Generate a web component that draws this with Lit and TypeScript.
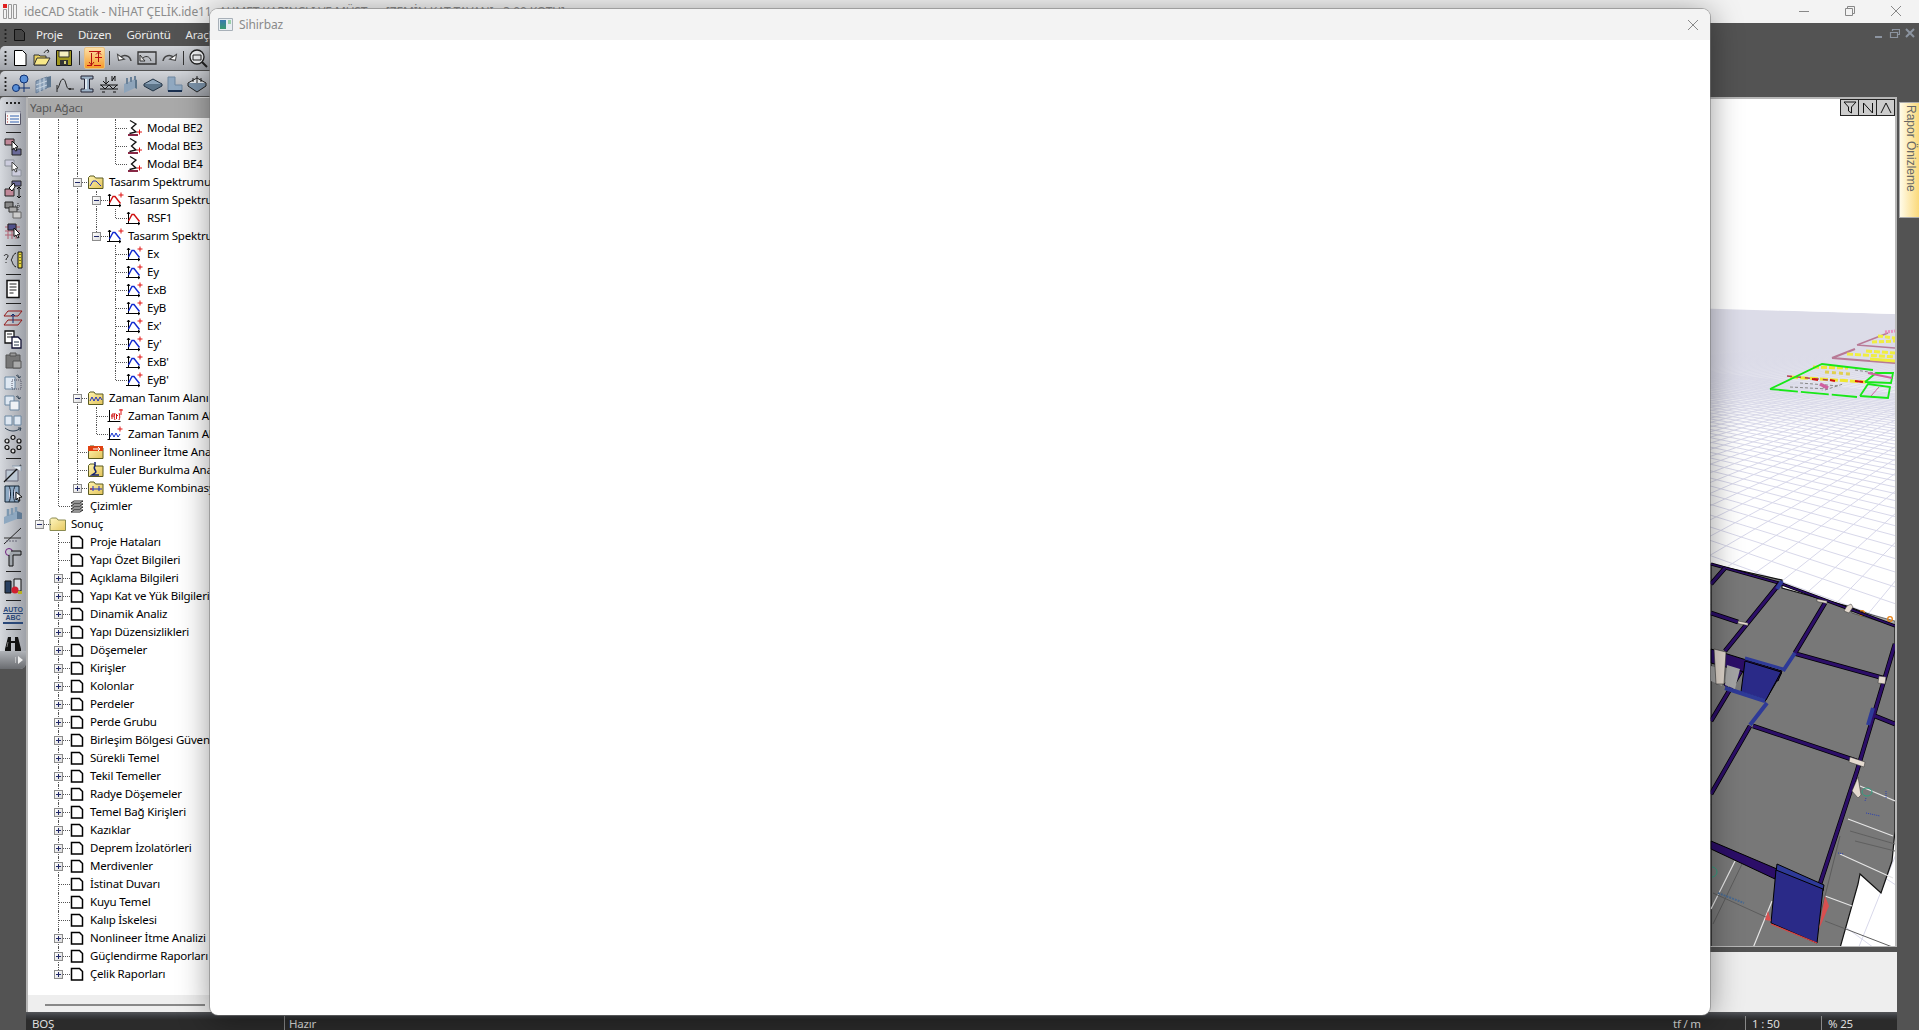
import { LitElement, html, css, svg } from "lit";
import { customElement } from "lit/decorators.js";

const icon = (w: number, h: number, body: unknown) =>
  html`<svg width=${w} height=${h} viewBox="0 0 ${w} ${h}">${body}</svg>`;

/* ---------- tree icons ---------- */
const plus = (x: number, y: number) => svg`<path d="M${x - 2.5} ${y}h5M${x} ${y - 2.5}v5" stroke="#e01010" fill="none"/>`;
const spectrum = (c: string) => icon(18, 16, svg`
  <path d="M3.500 2v12M1 13.500h14M2 4l1.500-2 1.500 2M13 12l2 1.500-2 1.500" stroke="#000" fill="none"/>
  <path d="M3.500 11L7 4.500h2l5.500 7" stroke=${c} stroke-width="1.400" fill="none"/>${plus(15, 3)}`);
const spectrumPlain = icon(18, 16, svg`
  <path d="M3.500 2v12M1 13.500h14M2 4l1.500-2 1.500 2M13 12l2 1.500-2 1.500" stroke="#000" fill="none"/>
  <path d="M3.500 11L7 4.500h2l5.500 7" stroke="#d01010" stroke-width="1.400" fill="none"/>`);
const sigma = icon(18, 18, svg`
  <path d="M5 1.500L11 5 6.500 9l4.500 4-6.500 1.500" stroke="#111" stroke-width="1.300" fill="none"/>
  <path d="M3 16h10" stroke="#7a1030" stroke-width="1.800"/>${plus(14.5, 13)}`);
const folderBase = (inner: unknown) => icon(18, 16, svg`
  <defs><linearGradient id="fg" x1="0" y1="0" x2="1" y2="1"><stop offset="0" stop-color="#fff4b0"/><stop offset="1" stop-color="#e3c35a"/></linearGradient></defs>
  <path d="M1.500 14.500V3.500L3 2h4l1.500 2h7.500v10.500z" fill="url(#fg)" stroke="#5a5a20"/>${inner}`);
const fSpec = folderBase(svg`<path d="M3 12l3-5h3l5 5" stroke="#2030c0" fill="none"/>`);
const fWave = folderBase(svg`<path d="M3 11l2-4 2 4 2-4 2 4 2-4 2 3" stroke="#2030c0" fill="none"/>`);
const fNon = folderBase(svg`<path d="M1 2h15v5H1z" fill="#e04010"/><path d="M6 5h7M11 3l2 2-2 2" stroke="#fff" fill="none"/>`);
const fEuler = folderBase(svg`<path d="M8 0v4c-3 3 3 5 0 7l-3 2h7" stroke="#102070" stroke-width="1.500" fill="none"/>`);
const fLoad = folderBase(svg`<path d="M3 9h12M6 6v5M12 6v5" stroke="#2030c0" fill="none"/><path d="M3 9h2" stroke="#d01010"/>`);
const folderPlain = icon(18, 16, svg`
  <defs><linearGradient id="fp" x1="0" y1="0" x2="1" y2="1"><stop offset="0" stop-color="#fff6c0"/><stop offset="1" stop-color="#e6c860"/></linearGradient></defs>
  <path d="M1 14.500V3.500L2.500 2h5l1.500 2h7.500v10.500z" fill="url(#fp)" stroke="#8a8a50"/>`);
const doc = icon(14, 14, svg`<path d="M1.500 1.500h8l3 3v8.500h-11z" fill="#fff" stroke="#000" stroke-width="1.500"/>`);
const drawings = icon(14, 14, svg`<path d="M1 4l3-2h9l-3 2zM1 7l3-2h9l-3 2zM1 10l3-2h9l-3 2zM1 13l3-2h9l-3 2z" fill="#fff" stroke="#111" stroke-width=".9"/>`);
const timeF = icon(18, 16, svg`
  <path d="M3.500 2v12M1.500 13.500h13" stroke="#000" fill="none"/>
  <path d="M6 11V6h2M5 8h3M9 5c-1 3-1 5 0 7M13 5c1 3 1 5 0 7M10.500 6v5M10 7.500h2" stroke="#d01010" fill="none"/>
  <path d="M15 1v6M13 2h4" stroke="#e01010" fill="none"/>`);
const timeW = icon(18, 16, svg`
  <path d="M3.500 2v12M1.500 13.500h13" stroke="#000" fill="none"/>
  <path d="M4 11l2-4 2 4 2-4 2 4 2-3" stroke="#1030d0" fill="none"/>${plus(14, 3)}`);

/* ---------- toolbar icons ---------- */
const T: Record<string, unknown> = {
  new: icon(20, 20, svg`<path d="M4.500 2.500h8l3.500 3.500v11.500H4.500z" fill="#fff" stroke="#000"/>`),
  open: icon(20, 20, svg`<path d="M2 17V7h5l1 1h6v9z" fill="#e8d060" stroke="#333"/><path d="M2 17l3-7h13l-4 7z" fill="#f8e888" stroke="#333"/><path d="M12 5c1-2.500 3-3 5-2M17 3l-2-1.500M17 3l-1.500 2" stroke="#333" fill="none"/>`),
  save: icon(20, 20, svg`<path d="M2.500 2.500h15v15h-15z" fill="#a09820" stroke="#111"/><path d="M5 3h10v6H5z" fill="#f4f0c0" stroke="#333"/><path d="M6 12h8v5.500H6z" fill="#333"/><path d="M10 13h2v3h-2z" fill="#d8d480"/>`),
  undo: icon(20, 20, svg`<path d="M5 10c3-4 10-3 11 3" stroke="#444" stroke-width="1.500" fill="none"/><path d="M3 6v6h6z" fill="#fff" stroke="#444" transform="rotate(-10 5 9)"/>`),
  box: icon(22, 20, svg`<path d="M2 4h18v12H2z" fill="none" stroke="#333" stroke-width="1.300"/><path d="M6 11c3-4 8-3 9 2" stroke="#333" fill="none"/><path d="M4 7v6h5z" fill="#ddd" stroke="#333"/>`),
  redo: icon(20, 20, svg`<path d="M15 10c-3-4-10-3-11 3" stroke="#444" stroke-width="1.500" fill="none"/><path d="M17 6v6h-6z" fill="#fff" stroke="#444" transform="rotate(10 15 9)"/>`),
  zoom: icon(20, 20, svg`<circle cx="9" cy="9" r="7" fill="#f4f6f8" stroke="#222" stroke-width="1.300"/><path d="M5 7h8v5H5z" fill="none" stroke="#222"/><path d="M14 14l5 5" stroke="#222" stroke-width="2"/>`),
  node: icon(20, 20, svg`<circle cx="13" cy="5" r="4" fill="#5a90d8" stroke="#103070"/><circle cx="5" cy="14" r="3.500" fill="#5a90d8" stroke="#103070"/><path d="M13 9v9M7 14h12" stroke="#103070"/>`),
  wall: icon(20, 20, svg`<path d="M3 7l11-4v11L3 19z" fill="#8aa0b8" stroke="#6a7f98"/><path d="M14 3l4-1v11l-4 1z" fill="#5d7690"/><path d="M3 11l11-4M3 15l11-4M7 5v13M11 4v12" stroke="#c8d4e0"/>`),
  curve: icon(20, 20, svg`<path d="M2 15c2 0 3-10 6-10s3 10 6 10" stroke="#222" fill="none"/><path d="M2 11v7M14 15h5" stroke="#222"/><circle cx="15" cy="15" r="1" fill="#222"/>`),
  ibeam: icon(20, 20, svg`<path d="M4 2h12v3h-3.500v10H16v3H4v-3h3.500V5H4z" fill="#9fb4c8" stroke="#223"/><path d="M8 5h2v10H8z" fill="#dfe8f0"/>`),
  load: icon(22, 20, svg`<path d="M2 11h18M2 15h18" stroke="#111"/><path d="M3 11l4 4 4-4 4 4 4-4" stroke="#111" fill="none"/><path d="M4 18h3M15 18h3M8 3v7M5 7l3 3 3-3" stroke="#111" fill="none"/><path d="M14 2v5l3-5v5" stroke="#111" fill="none"/>`),
  wall2: icon(20, 20, svg`<path d="M3 10l11-5v9L3 19z" fill="#8ea4ba"/><path d="M14 5l2 1v9l-2-1z" fill="#5c7489"/><path d="M6 4v6M10 3v5M14 2v4" stroke="#6a8198" stroke-width="2"/>`),
  slab: icon(20, 20, svg`<path d="M1 10l9-5 9 5-9 5z" fill="#8fa6bc" stroke="#234"/><path d="M1 10v2l9 5 9-5v-2" fill="#5c7489" stroke="#234"/>`),
  lshape: icon(20, 20, svg`<path d="M3 3h7v8h7v6H3z" fill="#90a8c0" stroke="#6f87a0"/><path d="M3 17h14" stroke="#1a3050" stroke-width="2"/>`),
  found: icon(20, 20, svg`<path d="M1 9l9-5 9 5-9 6z" fill="#f0f4f8" stroke="#222"/><path d="M1 9v3l9 6 9-6V9" fill="#7d94ab" stroke="#222"/><path d="M10 2v7M6 4v4M14 4v4" stroke="#222"/>`),
  list: icon(20, 20, svg`<path d="M2.500 3.500h15v13h-15z" fill="#f6f6f6" stroke="#556"/><path d="M2.500 3.500h15v2h-15z" fill="#d8dce4"/><path d="M7 8h9M7 11h9M7 14h9" stroke="#3060b0"/><path d="M4 8h1M4 11h1M4 14h1" stroke="#b02020"/>`),
  sel1: icon(20, 20, svg`<path d="M2 2h9v6H2z" fill="#c08898" stroke="#222"/><path d="M9 12h9v6H9z" fill="#6a6a98" stroke="#222"/><path d="M9 4l6 6-2.500.5 1.500 3-1.500.5-1.500-3-2 1.500z" fill="#fff" stroke="#111"/>`),
  sel2: icon(20, 20, svg`<path d="M2 2h9v6H2zM9 12h9v6H9z" fill="#ccd" stroke="#8a8f98"/><path d="M9 4l6 6-2.500.5 1.500 3-1.500.5-1.500-3-2 1.500z" fill="#fff" stroke="#444"/>`),
  sel3: icon(20, 20, svg`<path d="M9 2h9v5H9z" fill="#6a6a98" stroke="#222"/><path d="M2 10h9v7H2z" fill="#c08898" stroke="#222"/><path d="M6 9l5-5 1 4-3 4z" fill="#fff" stroke="#111"/><path d="M16 8v11M14 10l2-2 2 2M14 17l2 2 2-2" stroke="#111" fill="none"/>`),
  sel4: icon(20, 20, svg`<path d="M2 2h8v6H2z" fill="#888" stroke="#222"/><path d="M6 7h8v5H6z" fill="#aaa" stroke="#333"/><path d="M10 12h8v6h-8z" fill="#ccc" stroke="#666"/><path d="M15 3v7M12 6h6" stroke="#333" stroke-dasharray="1 1"/>`),
  sel5: icon(20, 20, svg`<path d="M2 6h15M2 10h15M2 14h15M5 3v15M9 3v15M13 3v15" stroke="#b06070"/><path d="M5 3h8v6H5z" fill="#50508a" stroke="#222"/><path d="M11 7l6 6-2.500.5 1.500 3-1.500.5-1.500-3-2 1.500z" fill="#fff" stroke="#111"/>`),
  ruler: icon(20, 20, svg`<path d="M15 2h4v16h-4z" fill="#e8d840" stroke="#111"/><path d="M17 4v12" stroke="#111" stroke-dasharray="1 2"/><path d="M13 3c-4 2-3 5-5 7 2 2 1 5 5 7" stroke="#111" fill="none"/><path d="M1 6c1-2 4-2 4 0s-2 2-2 4M3 12v1" stroke="#222" fill="none"/>`),
  report: icon(20, 20, svg`<path d="M4 1.500h12v17H4z" fill="#fff" stroke="#111" stroke-width="1.500"/><path d="M6.500 5h7M6.500 8h7M6.500 11h7M6.500 14h4" stroke="#222"/>`),
  floors: icon(20, 20, svg`<path d="M5 3h14l-4 5H1zM5 12h14l-4 5H1z" fill="none" stroke="#901818"/><path d="M10 6v9M8 8l2-2 2 2" stroke="#103070" fill="none"/>`),
  copy: icon(20, 20, svg`<path d="M2 2h9v12H2z" fill="#fff" stroke="#111" stroke-width="1.300"/><path d="M4 5h5M4 8h5" stroke="#222"/><path d="M9 8h6l3 3v8H9z" fill="#fff" stroke="#113" stroke-width="1.300"/><path d="M11 13h5M11 16h5" stroke="#234"/>`),
  paste: icon(20, 20, svg`<path d="M3 5h14v13H3z" fill="#777" stroke="#555"/><path d="M7 3h6v3H7z" fill="#999" stroke="#555"/><path d="M10 11h8v7h-8z" fill="#aaa" stroke="#555"/>`),
  rot1: icon(20, 20, svg`<path d="M2 6h10v12H2z" fill="#dfe8f2" stroke="#6a86a0"/><path d="M9 9h9v9H9z" fill="none" stroke="#556" stroke-dasharray="1 1"/><path d="M13 5c2-2 3 0 3 2M16 7l-1.500-2M16 7l2-1.500" stroke="#345" fill="none"/>`),
  rot2: icon(20, 20, svg`<path d="M2 4h9v9H2z" fill="#dfe8f2" stroke="#6a86a0"/><path d="M7 9h9v9H7z" fill="#eef2f6" stroke="#6a86a0"/><path d="M13 5c2-2 3 0 3 2M16 7l-1.500-2M16 7l2-1.500" stroke="#345" fill="none"/>`),
  mirror: icon(20, 20, svg`<path d="M2 3h7v9H2zM11 3h7v9h-7z" fill="#dfe8f2" stroke="#6a86a0"/><path d="M2 15c5 4 11 4 16 0M18 15h-3M18 15l-1 3" stroke="#345" fill="none"/>`),
  ring: icon(20, 20, svg`<g fill="#ddd" stroke="#111" stroke-width="1.200"><circle cx="10" cy="3.500" r="2"/><circle cx="16" cy="7" r="2"/><circle cx="16" cy="13.500" r="2"/><circle cx="10" cy="17" r="2"/><circle cx="4" cy="13.500" r="2"/><circle cx="4" cy="7" r="2"/></g>`),
  cut: icon(20, 20, svg`<path d="M3 7h12v11H3z" fill="#bcc8d4" stroke="#667"/><path d="M1 19L18 2" stroke="#111" stroke-width="1.300"/><path d="M9 3h9v5" fill="#e8eef4" stroke="#89a"/>`),
  col: icon(20, 20, svg`<path d="M2 2h14v16H2z" fill="#8faac4" stroke="#123"/><path d="M6 2c2 4 2 12 0 16M12 2c-2 4-2 12 0 16" fill="#dde" stroke="#123"/><path d="M13 8l6 5-3 .5 1 3-1.500 .5-1-3-1.500 2z" fill="#fff" stroke="#111"/>`),
  wall3: icon(20, 20, svg`<path d="M1 12l13-6v8L1 19z" fill="#8ea8c0"/><path d="M14 6l5 2v6l-5 0z" fill="#5f7a94"/><path d="M5 4v7M9 3v7M13 2v5" stroke="#7d98b0" stroke-width="2.500"/>`),
  diag: icon(20, 20, svg`<path d="M1 12h17" stroke="#333"/><path d="M1 18L18 2" stroke="#222"/><path d="M3 15h12" stroke="#667" stroke-dasharray="2 1"/>`),
  tee: icon(20, 20, svg`<circle cx="6" cy="5" r="3.500" fill="none" stroke="#702080"/><path d="M8 4h10v4h-8v11H6V8" fill="#a0a6ac" stroke="#111"/>`),
  bars: icon(20, 20, svg`<path d="M2 5h6v12H2z" fill="#2a4060" stroke="#111"/><path d="M11 3h7v12h-7z" fill="#d8dce0" stroke="#111"/><circle cx="12" cy="14" r="3.500" fill="#d02030"/><path d="M15 15h4v3h-4z" fill="#b8b020"/>`),
  binoc: icon(20, 20, svg`<path d="M5 3h3v4h4V3h3l3 12h-6V9H8v6H2z" fill="#111"/><path d="M2 15h6v3H2zM12 15h6v3h-6z" fill="#111"/><path d="M5 8l-1 5" stroke="#777"/>`),
};

const V: (string | null)[] = [
  "list", null, "sel1", "sel2", "sel3", "sel4", "sel5", null, "ruler", null, "report", null, "floors", "copy", "paste",
  "rot1", "rot2", "mirror", "ring", null, "cut", "col", "wall3", "diag", "tee", null, "bars", null, "auto", null, "binoc",
];

/* ---------- tree data ---------- */
type Row = { d: number; g: number[]; end?: boolean; box?: "+" | "-"; ic: unknown; t: string };
const blue = spectrum("#1028d0");
const red = spectrum("#d01010");
const L012 = [0, 1, 2];
const rows: Row[] = [
  { d: 4, g: L012, ic: sigma, t: "Modal BE2" },
  { d: 4, g: L012, ic: sigma, t: "Modal BE3" },
  { d: 4, g: L012, end: true, ic: sigma, t: "Modal BE4" },
  { d: 2, g: [0, 1], box: "-", ic: fSpec, t: "Tasarım Spektrumu" },
  { d: 3, g: L012, box: "-", ic: red, t: "Tasarım Spektrumu" },
  { d: 4, g: [0, 1, 2, 3], end: true, ic: spectrumPlain, t: "RSF1" },
  { d: 3, g: L012, end: true, box: "-", ic: blue, t: "Tasarım Spektrumu" },
  ...["Ex", "Ey", "ExB", "EyB", "Ex'", "Ey'", "ExB'"].map((t) => ({ d: 4, g: L012, ic: blue, t })),
  { d: 4, g: L012, end: true, ic: blue, t: "EyB'" },
  { d: 2, g: [0, 1], box: "-", ic: fWave, t: "Zaman Tanım Alanı" },
  { d: 3, g: L012, ic: timeF, t: "Zaman Tanım Alanı" },
  { d: 3, g: L012, end: true, ic: timeW, t: "Zaman Tanım Alanı" },
  { d: 2, g: [0, 1], ic: fNon, t: "Nonlineer İtme Analizi" },
  { d: 2, g: [0, 1], ic: fEuler, t: "Euler Burkulma Analizi" },
  { d: 2, g: [0, 1], end: true, box: "+", ic: fLoad, t: "Yükleme Kombinasyonları" },
  { d: 1, g: [0], end: true, ic: drawings, t: "Çizimler" },
  { d: 0, g: [], end: true, box: "-", ic: folderPlain, t: "Sonuç" },
  ...[
    ["Proje Hataları", 0], ["Yapı Özet Bilgileri", 0], ["Açıklama Bilgileri", 1], ["Yapı Kat ve Yük Bilgileri", 1],
    ["Dinamik Analiz", 1], ["Yapı Düzensizlikleri", 1], ["Döşemeler", 1], ["Kirişler", 1], ["Kolonlar", 1],
    ["Perdeler", 1], ["Perde Grubu", 1], ["Birleşim Bölgesi Güvenliği", 1], ["Sürekli Temel", 1], ["Tekil Temeller", 1],
    ["Radye Döşemeler", 1], ["Temel Bağ Kirişleri", 1], ["Kazıklar", 1], ["Deprem İzolatörleri", 1], ["Merdivenler", 1],
    ["İstinat Duvarı", 0], ["Kuyu Temel", 0], ["Kalıp İskelesi", 0], ["Nonlineer İtme Analizi", 1],
    ["Güçlendirme Raporları", 1],
  ].map(([t, b]) => ({ d: 1, g: [] as number[], box: b ? ("+" as const) : undefined, ic: doc, t: t as string })),
  { d: 1, g: [], end: true, box: "+", ic: doc, t: "Çelik Raporları" },
];

/* ---------- 3D view, drawn in page coordinates ---------- */
const VL = [973, 287];
const VR = [2110, 320];
const base = (x: number) => 320 + 0.029 * (x - 2110) + 600;
function gridLines() {
  const out: string[] = [];
  for (let i = -30; i < 60; i++) {
    const x = 1000 + i * 118;
    const y = base(x);
    out.push(`M${VL[0]} ${VL[1]}L${VL[0] + (x - VL[0]) * 2} ${VL[1] + (y - VL[1]) * 2}`);
  }
  for (let i = -60; i < 30; i++) {
    const x = 1790 + i * 82;
    const y = base(x);
    out.push(`M${VR[0]} ${VR[1]}L${VR[0] + (x - VR[0]) * 2} ${VR[1] + (y - VR[1]) * 2}`);
  }
  return out.join("");
}
const edge = "M1711 563L1782 583L1895 625";
const beams = "M1711 583L1725 567M1711 612L1738 621M1725 650L1780 582M1795 652L1825 602M1793 652L1883 677M1895 643L1857 770L1820 883M1711 720L1747 660M1725 685L1747 662M1750 725L1711 793M1753 725L1857 760M1875 715L1895 723M1780 671L1763 700";

@customElement("scene-view")
class SceneView extends LitElement {
  static styles = css`
    :host { display: block; flex: 1; min-height: 0; }
    svg { display: block; width: 100%; height: 100%; }
  `;
  render() {
    return html`<svg viewBox="210 98 1685 849" preserveAspectRatio="xMaxYMin slice">
      <defs>
        <linearGradient id="sky" x1="0" y1="0" x2="0" y2="1">
          <stop offset="0" stop-color="#dcdce8"/><stop offset=".42" stop-color="#dcdce8"/>
          <stop offset=".75" stop-color="#dcdce8" stop-opacity=".55"/><stop offset="1" stop-color="#dcdce8" stop-opacity="0"/>
        </linearGradient>
      </defs>
      <rect x="210" y="98" width="1685" height="849" fill="#fff"/>
      <path d=${gridLines()} stroke="#d8d8ea" stroke-width="1" fill="none"/>
      <path d="M1100 290L1895 313V430H1100z" fill="url(#sky)"/>
      <path d="M1100 290L1711 307L1895 313V98H1100z" fill="#fff"/>
      <g fill="none">
        <path d="M1857 344L1888 332M1857 344L1895 347" stroke="#b87a96" stroke-width="1.500"/>
        <path d="M1885 331L1895 330" stroke="#e890c0" stroke-width="3" stroke-dasharray="2 1"/>
        <path d="M1872 341L1895 340M1878 335L1895 337" stroke="#f0ee40" stroke-width="3" stroke-dasharray="5 2"/>
        <path d="M1832 357L1855 348M1832 357L1895 362" stroke="#b87a96" stroke-width="2"/>
        <path d="M1847 353L1895 356M1866 350L1895 352" stroke="#f0ee40" stroke-width="3" stroke-dasharray="6 2"/>
        <path d="M1870 358L1895 360" stroke="#f0ee40" stroke-width="3"/>
        <path d="M1813 366L1848 367" stroke="#f0e830" stroke-width="3" stroke-dasharray="6 2"/>
        <path d="M1825 371L1850 373" stroke="#e0d050" stroke-width="3" stroke-dasharray="4 3"/>
        <path d="M1790 376L1866 381" stroke="#f0e830" stroke-width="3" stroke-dasharray="8 2"/>
        <path d="M1787 375L1828 379" stroke="#b04050" stroke-width="1.500" stroke-dasharray="5 4"/>
        <path d="M1812 378l6 1M1830 379l5 1M1855 380l8 1" stroke="#d01010" stroke-width="1.800"/>
        <path d="M1855 369L1875 372M1800 382L1840 385M1790 386L1828 388M1825 389l18-6M1824 385l-2 5" stroke="#888" stroke-dasharray="3 2"/>
        <path d="M1820 383l8 4" stroke="#d060a0" stroke-width="3.500"/>
        <path d="M1770 388L1822 363L1873 369" stroke="#18e818" stroke-width="1.800"/>
        <path d="M1770 388L1857 396" stroke="#18e818" stroke-width="1.800" stroke-dasharray="28 3"/>
        <path d="M1865 381L1876 372L1893 372L1891 382L1865 381M1860 395L1868 383L1890 386L1888 397L1860 395" stroke="#18e818" stroke-width="1.800"/>
        <path d="M1871 395l8-9" stroke="#d060a0"/>
        <path d="M1868 372L1892 377" stroke="#d060a0" stroke-width="2"/>
      </g>
      <path d="M1711 563L1782 579V587L1847 605L1895 623V830L1892 860L1881 892L1860 873L1858 883L1840 947H1711z" fill="#787878" stroke="#111" stroke-width="1.200"/>
      <g fill="none">
        <path d="M1848 818L1893 835M1840 853L1893 877M1825 895L1852 905M1860 785L1895 800" stroke="#e6e6e6" stroke-width="1.200"/>
        <path d="M1735 860L1711 908M1772 900L1753 947" stroke="#e6e6e6" stroke-width="1.200"/>
        <path d="M1713 892L1768 917M1742 863L1713 923M1840 835L1820 915" stroke="#5c5c5c"/>
        <path d="M1825 920L1895 947M1855 840L1895 850M1850 830L1895 843" stroke="#5f5f5f"/>
      </g>
      <path d="M1850 608L1895 620V625L1852 612z" fill="#a8a8a8" stroke="#333" stroke-width=".6"/>
      <circle cx="1862" cy="612" r="2.300" fill="none" stroke="#e88010" stroke-width="1.300"/>
      <circle cx="1890" cy="618" r="2.300" fill="none" stroke="#e88010" stroke-width="1.300"/>
      <path d=${edge} fill="none" stroke="#000" stroke-width="3.200"/>
      <path d=${edge} fill="none" stroke="#2c0e68" stroke-width="1.800"/>
      <path d=${beams} fill="none" stroke="#000" stroke-width="4.600"/>
      <path d=${beams} fill="none" stroke="#2c0e68" stroke-width="3.200"/>
      <path d="M1711 648L1782 670L1778 680L1711 662z" fill="#2c0e68" stroke="#000"/>
      <path d="M1745 660L1781 671L1766 699L1741 691z" fill="#2a2a88" stroke="#000"/>
      <path d="M1745 657L1783 668" stroke="#2e3a98" stroke-width="3" fill="none"/>
      <path d="M1725 687L1765 700M1795 652L1783 670M1767 702L1750 724M1873 707L1868 724M1782 580L1777 588" stroke="#2e3a98" stroke-width="4" fill="none"/>
      <path d="M1711 665L1722 668L1722 685L1711 680zM1727 664L1740 668L1735 688L1725 684z" fill="#a5a5a5"/>
      <path d="M1714 648L1726 651L1724 683L1716 683z" fill="#e0d6cc" stroke="#333" stroke-width=".6"/>
      <path d="M1711 840L1777 868L1775 878L1711 848z" fill="#2c0e68" stroke="#000"/>
      <path d="M1777 863L1824 884L1823 890L1776 871z" fill="#2e3a98" stroke="#000"/>
      <path d="M1776 869L1823 888L1817 942L1771 922z" fill="#2a2a88" stroke="#000"/>
      <path d="M1771 923L1817 942" stroke="#e04040" stroke-width="1.200" fill="none"/>
      <path d="M1825 895L1819 928L1829 905z" fill="#d85050"/>
      <path d="M1768 910l-3 9 6 1z" fill="#d85050"/>
      <g fill="#e4dacf" stroke="#333" stroke-width=".5">
        <path d="M1738 620l10 2v2.500l-10-2z"/>
        <path d="M1817 598l10 2v2.500l-10-2z"/>
        <path d="M1847 605l4-2 2 3-4 6-5-2z"/>
        <path d="M1879 675l7 1-1 7-7-1z"/>
        <path d="M1850 756l15 5-1 5-15-5z"/>
        <path d="M1852 790l6-14 3 18-3 3z"/>
      </g>
      <g fill="none" stroke-width="1">
        <ellipse cx="1867" cy="791" rx="5" ry="4" stroke="#30a080"/>
        <path d="M1712 866a5 5 0 0 1 0 10" stroke="#30a080"/>
      </g>
      <path d="M1718 892l26 10" stroke="#4a6a90" stroke-width="2" stroke-dasharray="2 1" fill="none"/>
      <path d="M1866 812l14 3M1838 852l6 1M1866 797l-1 3M1886 790v8" stroke="#2a40b0" stroke-dasharray="1 1" fill="none"/>
    </svg>`;
  }
}

@customElement("app-root")
export class AppRoot extends LitElement {
  static styles = css`
    :host { display: block; width: 1919px; height: 1030px; position: relative; overflow: hidden; font-family: "Noto Sans", sans-serif; font-size: 11.5px; letter-spacing: -.2px; background: #535353; }
    svg { display: block; flex: none; }
    .page { display: flex; flex-direction: column; height: 100%; }

    .title { height: 23px; flex: none; background: #f3f3f3; display: flex; align-items: center; color: #8c8c8c; font-size: 12px; letter-spacing: -.1px; white-space: nowrap; overflow: hidden; position: relative; }
    .logo { margin: 0 7px 0 3px; }
    .title .app { width: 195px; flex: none; }
    .winbtns { position: absolute; right: 0; top: 0; display: flex; }
    .winbtn { width: 46px; height: 21px; display: flex; align-items: center; justify-content: center; }

    .menu { height: 23px; flex: none; display: flex; align-items: center; color: #eee; position: relative; }
    .menu .grip { margin: 0 7px 0 4px; }
    .menu .mdi { margin-right: 11px; }
    .menu span { margin-right: 15px; }
    .mdibtns { position: absolute; right: 3px; top: 5px; display: flex; gap: 5px; }
    .grip { width: 3px; height: 14px; flex: none; background: radial-gradient(circle, #222 1px, transparent 1.200px) 0 0 / 3px 4px; }

    .bar { flex: none; width: 260px; display: flex; align-items: center; border-radius: 5px 0 0 0; background: linear-gradient(#d2d5da, #a0a3a9); }
    .bar1 { height: 24px; margin-bottom: 1px; }
    .bar2 { height: 25px; margin-bottom: 1px; }
    .bar .grip { margin: 0 2px 0 4px; height: 16px; }
    .tb { width: 22px; height: 22px; flex: none; display: flex; align-items: center; justify-content: center; }
    .tb.active { width: 21px; background: linear-gradient(#fde0a8, #f59a28); border: 1px solid #e8c080; box-sizing: border-box; border-radius: 2px; }
    .vs { width: 1px; height: 14px; background: #333; margin: 0 4px; flex: none; }
    .vs.tight { margin: 0 3px; }
    .bar2 .grip { margin-right: 3px; }

    .body { flex: 1; min-height: 0; display: flex; }
    .vbar { width: 26px; flex: none; align-self: flex-start; height: 572px; box-sizing: border-box; padding-top: 10px; background: linear-gradient(90deg, #d6d9de, #9ea1a8); border-radius: 4px 0 6px 0; display: flex; flex-direction: column; align-items: center; position: relative; }
    .hgrip { width: 14px; height: 2px; flex: none; background: repeating-linear-gradient(90deg, #222 0 2px, transparent 2px 4px); position: absolute; top: 5px; left: 6px; }
    .vi { height: 21px; width: 24px; flex: none; display: flex; align-items: center; justify-content: center; }
    .hs { height: 8px; width: 100%; flex: none; display: flex; align-items: center; justify-content: center; }
    .hs::before { content: ""; width: 15px; height: 1px; background: #222; }
    .auto { font: bold 7px/8px "Liberation Sans", sans-serif; letter-spacing: 0; color: #2a4878; text-align: center; border-bottom: 2px solid #2a4878; }
    .auto b { display: block; border-bottom: 1px solid #2a4878; font-size: 7px; line-height: 7px; }
    .flap { position: absolute; left: 0; right: 0; bottom: 0; height: 18px; background: linear-gradient(#b0b3b8, #6a6c70); border-radius: 0 0 6px 0; display: flex; align-items: center; justify-content: flex-end; padding-right: 3px; box-sizing: border-box; }

    .tree { width: 184px; flex: none; box-sizing: border-box; border-left: 2px solid #b5b5b5; display: flex; flex-direction: column; overflow: hidden; background: #fff; }
    .thead { height: 21px; flex: none; background: #a9a9a9; color: #555; display: flex; align-items: center; padding: 0 0 1px 2px; border-top: 1px solid #ddd; box-sizing: border-box; }
    .tlist { flex: 1; min-height: 0; padding: 1px 0 0 2px; overflow: hidden; }
    .tfoot { height: 17px; flex: none; background: #eee; display: flex; align-items: center; padding-left: 17px; }
    .thumb { width: 160px; height: 2px; background: #888; margin-top: 2px; }
    .row { height: 18px; display: flex; align-items: center; white-space: nowrap; color: #000; }
    .row span { margin-top: -1px; }
    .guide, .conn { width: 19px; height: 18px; flex: none; position: relative; }
    .guide.on::before, .conn::before { content: ""; position: absolute; left: 9px; top: 0; bottom: 0; border-left: 1px dotted #555; }
    .conn.end::before { bottom: 9px; }
    .conn::after { content: ""; position: absolute; left: 10px; right: -2px; top: 9px; border-top: 1px dotted #555; }
    .pm { position: absolute; left: 5px; top: 5px; width: 9px; height: 9px; box-sizing: border-box; background: linear-gradient(135deg, #fff, #dcdcdc); border: 1px solid #8c8c8c; z-index: 1; }
    .pm::before { content: ""; position: absolute; left: 1px; right: 1px; top: 3px; height: 1px; background: #202868; }
    .pm.plus::after { content: ""; position: absolute; top: 1px; bottom: 1px; left: 3px; width: 1px; background: #202868; }
    .ric { width: 18px; height: 18px; flex: none; display: flex; align-items: center; justify-content: center; margin-right: 4px; }

    .center { flex: 1; min-width: 0; display: flex; flex-direction: column; }
    .view { flex: 1; min-height: 0; border: solid #b8b8b8; border-width: 2px 2px 1px 0; display: flex; position: relative; background: #fff; }
    .vbtns { position: absolute; right: 0; top: 0; display: flex; background: #222; padding: 1px; gap: 1px; }
    .vbtn { width: 17px; height: 15px; background: #ccc; display: flex; align-items: center; justify-content: center; }
    .lower { height: 60px; flex: none; margin-top: 5px; background: #eee; }
    .side { width: 22px; flex: none; padding-top: 5px; }
    .tab { box-sizing: border-box; margin-left: 2px; width: 20px; height: 116px; background: linear-gradient(90deg, #fffbe8, #fbd97a); border: solid #aaa; border-width: 1px 0 1px 1px; writing-mode: vertical-rl; font: 12px/17px "Liberation Sans", sans-serif; color: #666; padding-top: 2px; letter-spacing: 0; }

    .status { height: 18px; flex: none; margin: 0 22px 0 26px; background: linear-gradient(#54565a 0, #3a3c40 4px, #2b2b2b 8px); color: #ddd; display: flex; align-items: flex-end; line-height: 16px; position: relative; overflow: hidden; white-space: nowrap; }
    .sc { box-sizing: border-box; padding-left: 4px; height: 14px; border-left: 1px solid #888; flex: none; }
    .sc.first { border: 0; width: 258px; padding-left: 6px; }
    .sc.grow { flex: 1; }
    .sc.u { border: 0; width: 76px; text-align: left; }
    .sc.s { width: 76px; padding-left: 6px; }
    .sc.z { width: 76px; padding-left: 6px; }

    .dialog { position: absolute; left: 210px; top: 9px; width: 1500px; height: 1006px; background: #fff; border-radius: 8px; box-shadow: 0 0 0 1px rgba(120,120,120,.55), 0 4px 32px rgba(0,0,0,.42); display: flex; flex-direction: column; overflow: hidden; }
    .dtitle { height: 31px; flex: none; background: #f3f3f3; display: flex; align-items: center; color: #8a8a8a; padding: 0 11px 0 8px; gap: 6px; }
    .dtitle span { flex: 1; font-size: 12px; letter-spacing: -.1px; }
  `;

  private tree() {
    return rows.map(
      (r) => html`<div class="row">
        ${Array.from({ length: r.d }, (_, i) => html`<div class="guide ${r.g.includes(i) ? "on" : ""}"></div>`)}
        <div class="conn ${r.end ? "end" : ""}">${r.box ? html`<div class="pm ${r.box === "+" ? "plus" : ""}"></div>` : ""}</div>
        <div class="ric">${r.ic}</div><span>${r.t}</span>
      </div>`
    );
  }

  render() {
    return html`
      <div class="page">
        <div class="title">
          <div class="logo">${icon(14, 17, svg`<path d="M0 1h4v4H0z" fill="#e02020"/><path d="M.5 6.500h3v9h-3zM5.500 1.500h3v14h-3zM10.500 1.500h3v14h-3z" fill="none" stroke="#9a9a9a"/>`)}</div>
          <span class="app">ideCAD Statik - NİHAT ÇELİK.ide11</span>
          <span>AHMET KARINCLI VE MÜŞT... - [ZEMİN KAT TAVANI - 3.00 KOTU]</span>
          <div class="winbtns">
            <div class="winbtn">${icon(12, 12, svg`<path d="M1 6.500h10" stroke="#888"/>`)}</div>
            <div class="winbtn">${icon(12, 12, svg`<path d="M1.500 3.500h7v7h-7zM3.500 3.500v-2h7v7h-2" fill="none" stroke="#888"/>`)}</div>
            <div class="winbtn">${icon(12, 12, svg`<path d="M1 1l10 10M11 1L1 11" stroke="#888"/>`)}</div>
          </div>
        </div>
        <div class="menu">
          <div class="grip"></div>
          <div class="mdi">${icon(11, 12, svg`<path d="M.5 .5h7l3 3v8H.5z" fill="#444" stroke="#111"/>`)}</div>
          <span>Proje</span><span>Düzen</span><span>Görüntü</span><span>Araçlar</span>
          <div class="mdibtns">
            ${icon(11, 11, svg`<path d="M2 9h7" stroke="#8c94a0" stroke-width="2"/>`)}
            ${icon(11, 11, svg`<path d="M1.500 4.500h7v5h-7zM3.500 3V1.500h7v5H9" fill="none" stroke="#8c94a0" stroke-width="1.200"/>`)}
            ${icon(11, 11, svg`<path d="M1 1l8 8M9 1l-8 8" stroke="#8c94a0" stroke-width="2"/>`)}
          </div>
        </div>
        <div class="bar bar1">
          <div class="grip"></div>
          <div class="tb">${T.new}</div><div class="tb">${T.open}</div><div class="tb">${T.save}</div>
          <div class="vs"></div>
          <div class="tb active">${icon(18, 18, svg`<path d="M3 2.500h12M8 16.500h7M1 16.500h5M9 8.500h7" stroke="#c01010"/><path d="M5.500 4v12M3 13l2.500 3 2.500-3M12.500 3v10M10 5.500L12.500 3l2.500 2.500" stroke="#b01010" fill="none"/>`)}</div>
          <div class="vs"></div>
          <div class="tb">${T.undo}</div><div class="tb">${T.box}</div><div class="tb">${T.redo}</div>
          <div class="vs tight"></div>
          <div class="tb">${T.zoom}</div>
        </div>
        <div class="bar bar2">
          <div class="grip"></div>
          ${["node", "wall", "curve", "ibeam", "load", "wall2", "slab", "lshape", "found"].map((k) => html`<div class="tb">${T[k]}</div>`)}
        </div>
        <div class="body">
          <div class="vbar">
            <div class="hgrip"></div>
            ${V.map((k) =>
              k === null
                ? html`<div class="hs"></div>`
                : k === "auto"
                ? html`<div class="vi"><div class="auto"><b>AUTO</b>ABC</div></div>`
                : html`<div class="vi">${T[k]}</div>`
            )}
            <div class="flap">${icon(8, 8, svg`<path d="M0 1v6" stroke="#eee"/><path d="M3 0l5 4-5 4z" fill="#eee"/>`)}</div>
          </div>
          <div class="tree">
            <div class="thead">Yapı Ağacı</div>
            <div class="tlist">${this.tree()}</div>
            <div class="tfoot"><div class="thumb"></div></div>
          </div>
          <div class="center">
            <div class="view">
              <scene-view></scene-view>
              <div class="vbtns">
                <div class="vbtn">${icon(14, 13, svg`<path d="M1 1h12L8.500 6v6L5.500 10V6z" fill="none" stroke="#111"/>`)}</div>
                <div class="vbtn">${icon(12, 12, svg`<path d="M1.500 11V1l9 10V1" fill="none" stroke="#111"/>`)}</div>
                <div class="vbtn">${icon(12, 12, svg`<path d="M1 11L6 1l5 10" fill="none" stroke="#111"/>`)}</div>
              </div>
            </div>
            <div class="lower"></div>
          </div>
          <div class="side"><div class="tab">Rapor Önizleme</div></div>
        </div>
        <div class="status">
          <div class="sc first">BOŞ</div>
          <div class="sc grow">Hazır</div>
          <div class="sc u">tf / m</div>
          <div class="sc s">1 : 50</div>
          <div class="sc z">% 25</div>
        </div>
      </div>
      <div class="dialog">
        <div class="dtitle">
          ${icon(15, 13, svg`<defs><linearGradient id="dg" x1="0" y1="0" x2="0" y2="1"><stop offset="0" stop-color="#3a7ab0"/><stop offset="1" stop-color="#3a9a70"/></linearGradient></defs><path d="M.5 .5h14v12H.5z" fill="#e8eef2" stroke="#a8b0b8"/><path d="M2 2h6v9H2z" fill="url(#dg)"/><path d="M10 2h3v4h-3z" fill="#9ad0a8"/>`)}
          <span>Sihirbaz</span>
          ${icon(12, 12, svg`<path d="M1 1l10 10M11 1L1 11" stroke="#888"/>`)}
        </div>
      </div>
    `;
  }
}
